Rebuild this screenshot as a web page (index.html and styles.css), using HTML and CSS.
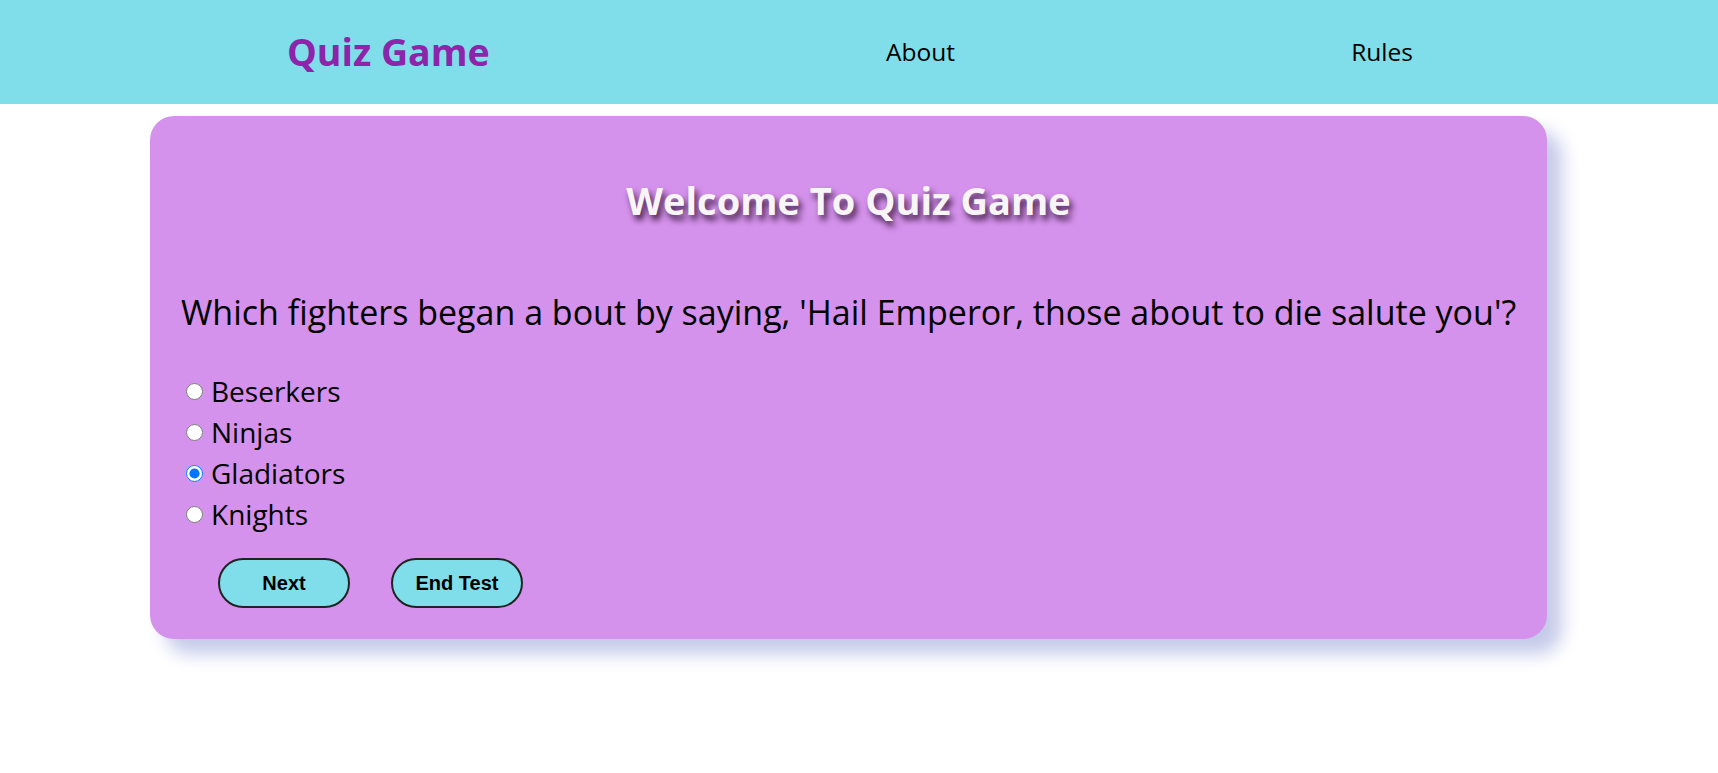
FILE: index.html
```html
<!DOCTYPE html>
<html lang="en">
<head>
<meta charset="utf-8">
<title>Quiz Game</title>
<link rel="stylesheet" href="styles.css">
</head>
<body>
<header class="topbar">
  <div class="brand">Quiz Game</div>
  <a class="nav-link" href="#">About</a>
  <a class="nav-link" href="#">Rules</a>
</header>
<main class="card">
  <h1 class="welcome">Welcome To Quiz Game</h1>
  <h2 class="question">Which fighters began a bout by saying, 'Hail Emperor, those about to die salute you'?</h2>
  <div class="options">
    <label class="option"><input type="radio" name="ans">Beserkers</label>
    <label class="option"><input type="radio" name="ans">Ninjas</label>
    <label class="option"><input type="radio" name="ans" checked>Gladiators</label>
    <label class="option"><input type="radio" name="ans">Knights</label>
  </div>
  <div class="actions">
    <button class="btn">Next</button>
    <button class="btn">End Test</button>
  </div>
</main>
</body>
</html>
```
FILE: styles.css
```css
html, body {
  margin: 0;
  padding: 0;
  background: #ffffff;
}
body {
  font-family: "Open Sans", "Noto Sans", sans-serif;
  color: #000;
  min-height: 773px;
}
.topbar {
  height: 104px;
  background: #80deea;
  display: flex;
  align-items: center;
  justify-content: space-between;
  padding: 0 305px 0 287px;
  box-sizing: border-box;
}
.brand {
  color: #8e24aa;
  font-weight: 700;
  font-size: 37.5px;
  line-height: 1;
  margin-top: 0;
}
.nav-link {
  color: #000;
  text-decoration: none;
  font-size: 24.5px;
  margin-top: -2px;
}
.card {
  margin: 12px 0 40px 150px;
  width: 1397px;
  height: 523px;
  box-sizing: border-box;
  background: #d592ec;
  border-radius: 24px;
  box-shadow: 15px 15px 18px #c5cae9;
  padding: 60px 30px 30px;
  display: flex;
  flex-direction: column;
}
.welcome {
  margin: 0;
  text-align: center;
  font-size: 38px;
  line-height: 48px;
  font-weight: 700;
  color: #f7f5f7;
  text-shadow: 3px 5px 6px rgba(40, 10, 45, 0.85);
}
.question {
  margin: 68px 0 0;
  text-align: center;
  font-size: 34px;
  line-height: 40px;
  font-weight: 400;
  white-space: nowrap;
}
.options {
  margin-top: 38px;
  display: flex;
  flex-direction: column;
}
.option {
  display: flex;
  align-items: center;
  height: 41px;
  font-size: 28px;
  font-weight: 500;
}
.option input {
  width: 17px;
  height: 17px;
  margin: 2px 8px 0 6px;
}
.actions {
  margin-top: 24px;
  padding-left: 38px;
  display: flex;
  gap: 41px;
}
.btn {
  width: 132px;
  height: 50px;
  box-sizing: border-box;
  border: 2px solid #222;
  border-radius: 25px;
  background: #80deea;
  font-family: "Liberation Sans", Arial, sans-serif;
  font-weight: 700;
  font-size: 20px;
  color: #000;
  padding: 0;
}
```
